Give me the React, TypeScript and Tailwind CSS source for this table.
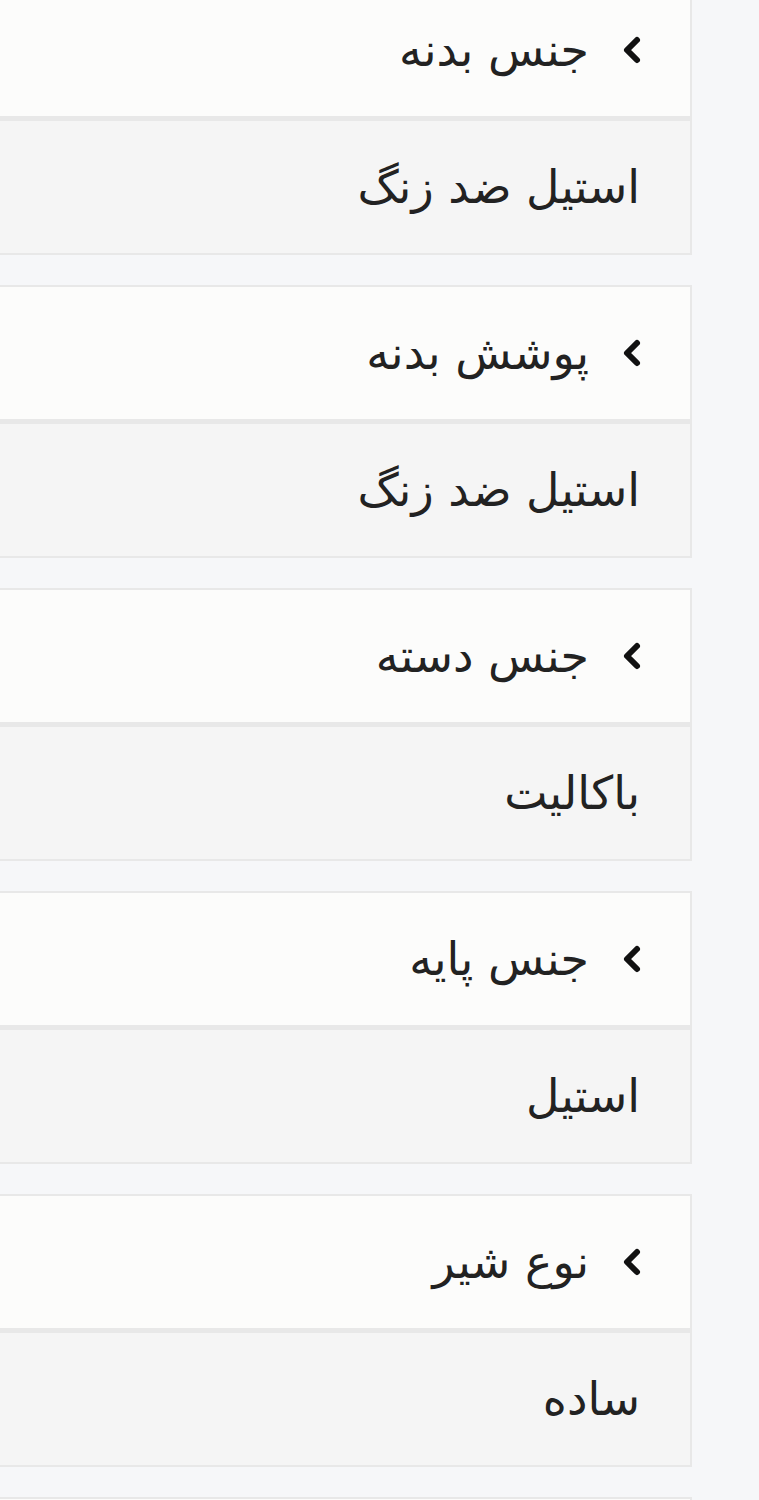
import React from "react";

interface Spec {
  label: string;
  value: string;
}

const specs: Spec[] = [
  { label: "جنس بدنه", value: "استیل ضد زنگ" },
  { label: "پوشش بدنه", value: "استیل ضد زنگ" },
  { label: "جنس دسته", value: "باکالیت" },
  { label: "جنس پایه", value: "استیل" },
  { label: "نوع شیر", value: "ساده" },
  { label: "", value: "" },
];

const Chevron = () => (
  <svg width="22" height="30" viewBox="0 0 22 30" className="shrink-0">
    <polyline
      points="16,5 6,15 16,25"
      fill="none"
      stroke="#111"
      strokeWidth="6"
      strokeLinecap="round"
      strokeLinejoin="round"
    />
  </svg>
);

export default function App() {
  return (
    <div
      dir="rtl"
      className="h-[1500px] w-[759px] overflow-hidden bg-[#f6f7f9] text-[#222]"
      style={{ fontFamily: '"DejaVu Sans", "Noto Sans", sans-serif' }}
    >
      <div className="mt-[-18px] mr-[67px] w-[712px] flex flex-col gap-[30px]">
        {specs.map((spec, i) => (
          <div key={i} className="flex flex-col">
            <div className="h-[136px] flex items-center gap-[32px] pr-[47px] bg-[#fcfcfb] border-2 border-[#e8e8e8]">
              {spec.label && <Chevron />}
              <span className="text-[46px] leading-none">{spec.label}</span>
            </div>
            <div className="h-[137px] flex items-center pr-[50px] bg-[#f5f5f5] border-2 border-t-[3px] border-[#e8e8e8]">
              <span className="text-[46px] leading-none">{spec.value}</span>
            </div>
          </div>
        ))}
      </div>
    </div>
  );
}
